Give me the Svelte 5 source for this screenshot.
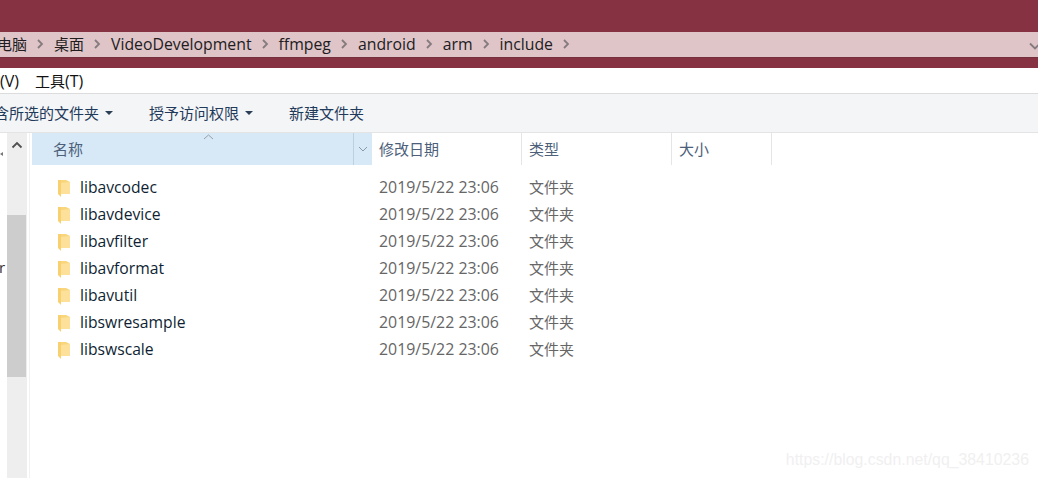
<script>
    const crumbs = [
        { text: '桌面', cjk: true },
        { text: 'VideoDevelopment' },
        { text: 'ffmpeg' },
        { text: 'android' },
        { text: 'arm' },
        { text: 'include' }
    ];
    const folders = ['libavcodec', 'libavdevice', 'libavfilter', 'libavformat', 'libavutil', 'libswresample', 'libswscale'];
    const columns = [
        { label: '修改日期', width: 150 },
        { label: '类型', width: 150 },
        { label: '大小', width: 100 }
    ];
</script>

{#snippet chevron()}
    <svg class="sep" width="8" height="12" viewBox="0 0 8 12"><path d="M2 2l4 4-4 4" fill="none" stroke="#857b7e" stroke-width="1.8" /></svg>
{/snippet}

<div class="window">
    <div class="titlebar"></div>

    <div class="addressband">
        <div class="address">
            <span class="cut">电脑</span>
            {@render chevron()}
            {#each crumbs as crumb}
                <span class="crumb" class:cjk={crumb.cjk}>{crumb.text}</span>
                {@render chevron()}
            {/each}
            <svg class="drop" width="12" height="8" viewBox="0 0 12 8"><path d="M1 1.5l5 5 5-5" fill="none" stroke="#857b7e" stroke-width="1.8" /></svg>
        </div>
    </div>

    <div class="menu">
        <span class="latin">(V)</span>
        <span>工具<span class="latin">(T)</span></span>
    </div>

    <div class="toolbar">
        <span class="tool first">含所选的文件夹<i class="caret"></i></span>
        <span class="tool second">授予访问权限<i class="caret"></i></span>
        <span class="tool third">新建文件夹</span>
    </div>

    <div class="body">
        <div class="side">
            <div class="tree">
                <span class="tree-arrow">
                    <svg width="3" height="5" viewBox="0 0 3 5"><path d="M3 0v4L0 2z" fill="#777" /></svg>
                </span>
                <span class="tree-r">r</span>
            </div>
            <div class="scrollbar">
                <svg class="up" width="12" height="8" viewBox="0 0 12 8"><path d="M1.500 6.500L6 2l4.500 4.500" fill="none" stroke="#505050" stroke-width="1.800" /></svg>
                <div class="thumb"></div>
            </div>
        </div>

        <div class="list">
            <div class="head">
                <div class="col-name">
                    <svg class="sort" width="11" height="6" viewBox="0 0 11 6"><path d="M1 5l4.500-4 4.500 4" fill="none" stroke="#9a9fa6" /></svg>
                    <span class="name-label">名称</span>
                    <span class="name-drop">
                        <svg width="10" height="6" viewBox="0 0 10 6"><path d="M1 1l4 4 4-4" fill="none" stroke="#8b97a3" /></svg>
                    </span>
                </div>
                {#each columns as col}
                    <div class="col" style="width: {col.width}px">{col.label}</div>
                {/each}
            </div>

            <div class="rows">
                {#each folders as name}
                    <div class="row">
                        <svg class="folder" width="14" height="18" viewBox="0 0 14 18">
                            <path d="M1 1h8l4 2v12H1z" fill="#f9d67c" />
                            <path d="M4 4l9-1v12H4z" fill="#fde19a" />
                            <path d="M1 1h3v17L1 15z" fill="#f8d070" />
                        </svg>
                        <span class="fname">{name}</span>
                        <span class="date">2019/5/22 23:06</span>
                        <span class="type">文件夹</span>
                    </div>
                {/each}
            </div>
        </div>
    </div>

    <span class="watermark">https://blog.csdn.net/qq_38410236</span>
</div>

<style>
    :global(body) {
        margin: 0;
        background: #fff;
    }

    .window {
        position: relative;
        width: 1038px;
        height: 478px;
        overflow: hidden;
        font-family: "Open Sans", "Noto Sans CJK SC", sans-serif;
        font-size: 15px;
        color: #1a1a1a;
    }

    .titlebar {
        height: 32px;
        background: #873242;
    }

    .addressband {
        height: 36px;
        background: #873242;
    }

    .address {
        display: flex;
        align-items: center;
        height: 26px;
        padding-bottom: 2px;
        background: #dfc4c8;
        border-bottom: 1px solid #74303c;
        box-sizing: border-box;
        overflow: hidden;
        color: #211c1d;
    }

    .cut {
        margin-left: -3px;
    }

    .crumb {
        font-size: 15.8px;
        white-space: nowrap;
    }

    .crumb.cjk {
        font-size: 15px;
    }

    .sep {
        margin: 0 10px 0 9px;
        flex: none;
    }

    .drop {
        margin-left: auto;
        margin-right: -3px;
        margin-top: 5px;
        flex: none;
    }

    .menu {
        display: flex;
        align-items: center;
        gap: 16px;
        height: 25px;
        color: #111;
    }

    .latin {
        font-size: 16px;
    }

    .toolbar {
        display: flex;
        align-items: center;
        height: 40px;
        padding-bottom: 1px;
        box-sizing: border-box;
        background: #f4f5f7;
        border-top: 1px solid #dcdcdc;
        border-bottom: 1px solid #e4e4e4;
        color: #1f3a5a;
        white-space: nowrap;
    }

    .tool {
        display: flex;
        align-items: center;
    }

    .first {
        margin-left: -6px;
    }

    .second,
    .third {
        margin-left: 36px;
    }

    .caret {
        width: 0;
        height: 0;
        margin-left: 6px;
        border-left: 4px solid transparent;
        border-right: 4px solid transparent;
        border-top: 4px solid #2b3f55;
    }

    .body {
        display: flex;
        height: 345px;
    }

    .side {
        display: flex;
        flex: none;
        box-sizing: border-box;
        width: 30px;
        border-right: 1px solid #f1f1f1;
    }

    .tree {
        position: relative;
        flex: none;
        width: 7px;
        overflow: hidden;
    }

    .tree-arrow {
        position: absolute;
        left: 0;
        top: 8px;
    }

    .tree-r {
        position: absolute;
        left: -1px;
        top: 124px;
        color: #333;
    }

    .scrollbar {
        display: flex;
        flex: none;
        flex-direction: column;
        align-items: center;
        width: 20px;
        height: 345px;
        background: #eeeeee;
    }

    .up {
        flex: none;
        margin-top: 8px;
    }

    .thumb {
        width: 19px;
        height: 162px;
        margin-top: 66px;
        margin-right: 1px;
        background: #cdcdcd;
    }

    .list {
        flex: 1;
        padding-left: 2px;
    }

    .head {
        display: flex;
        height: 32px;
        color: #4c607a;
    }

    .col-name {
        position: relative;
        display: flex;
        align-items: center;
        flex: none;
        width: 340px;
        background: #d7e8f7;
    }

    .sort {
        position: absolute;
        left: 171px;
        top: 1px;
    }

    .name-label {
        margin-left: 21px;
        padding-bottom: 2px;
    }

    .name-drop {
        display: flex;
        align-items: center;
        justify-content: center;
        margin-left: auto;
        width: 18px;
        height: 100%;
        border-left: 1px solid #bcd0e0;
    }

    .col {
        display: flex;
        align-items: center;
        box-sizing: border-box;
        padding: 0 0 2px 7px;
        border-right: 1px solid #e5e5e5;
    }

    .rows {
        padding-top: 9px;
    }

    .row {
        display: flex;
        align-items: center;
        height: 27px;
    }

    .folder {
        flex: none;
        margin-left: 25px;
    }

    .fname {
        width: 299px;
        margin-left: 9px;
        padding-bottom: 2px;
        font-size: 15.7px;
        color: #0f1f33;
    }

    .date {
        width: 150px;
        padding-bottom: 2px;
        font-size: 15.9px;
        color: #666;
    }

    .type {
        padding-bottom: 2px;
        color: #666;
    }

    .watermark {
        position: absolute;
        right: 9px;
        top: 451px;
        font-family: "Liberation Sans", sans-serif;
        font-size: 15.85px;
        color: #f0f0f0;
    }
</style>
